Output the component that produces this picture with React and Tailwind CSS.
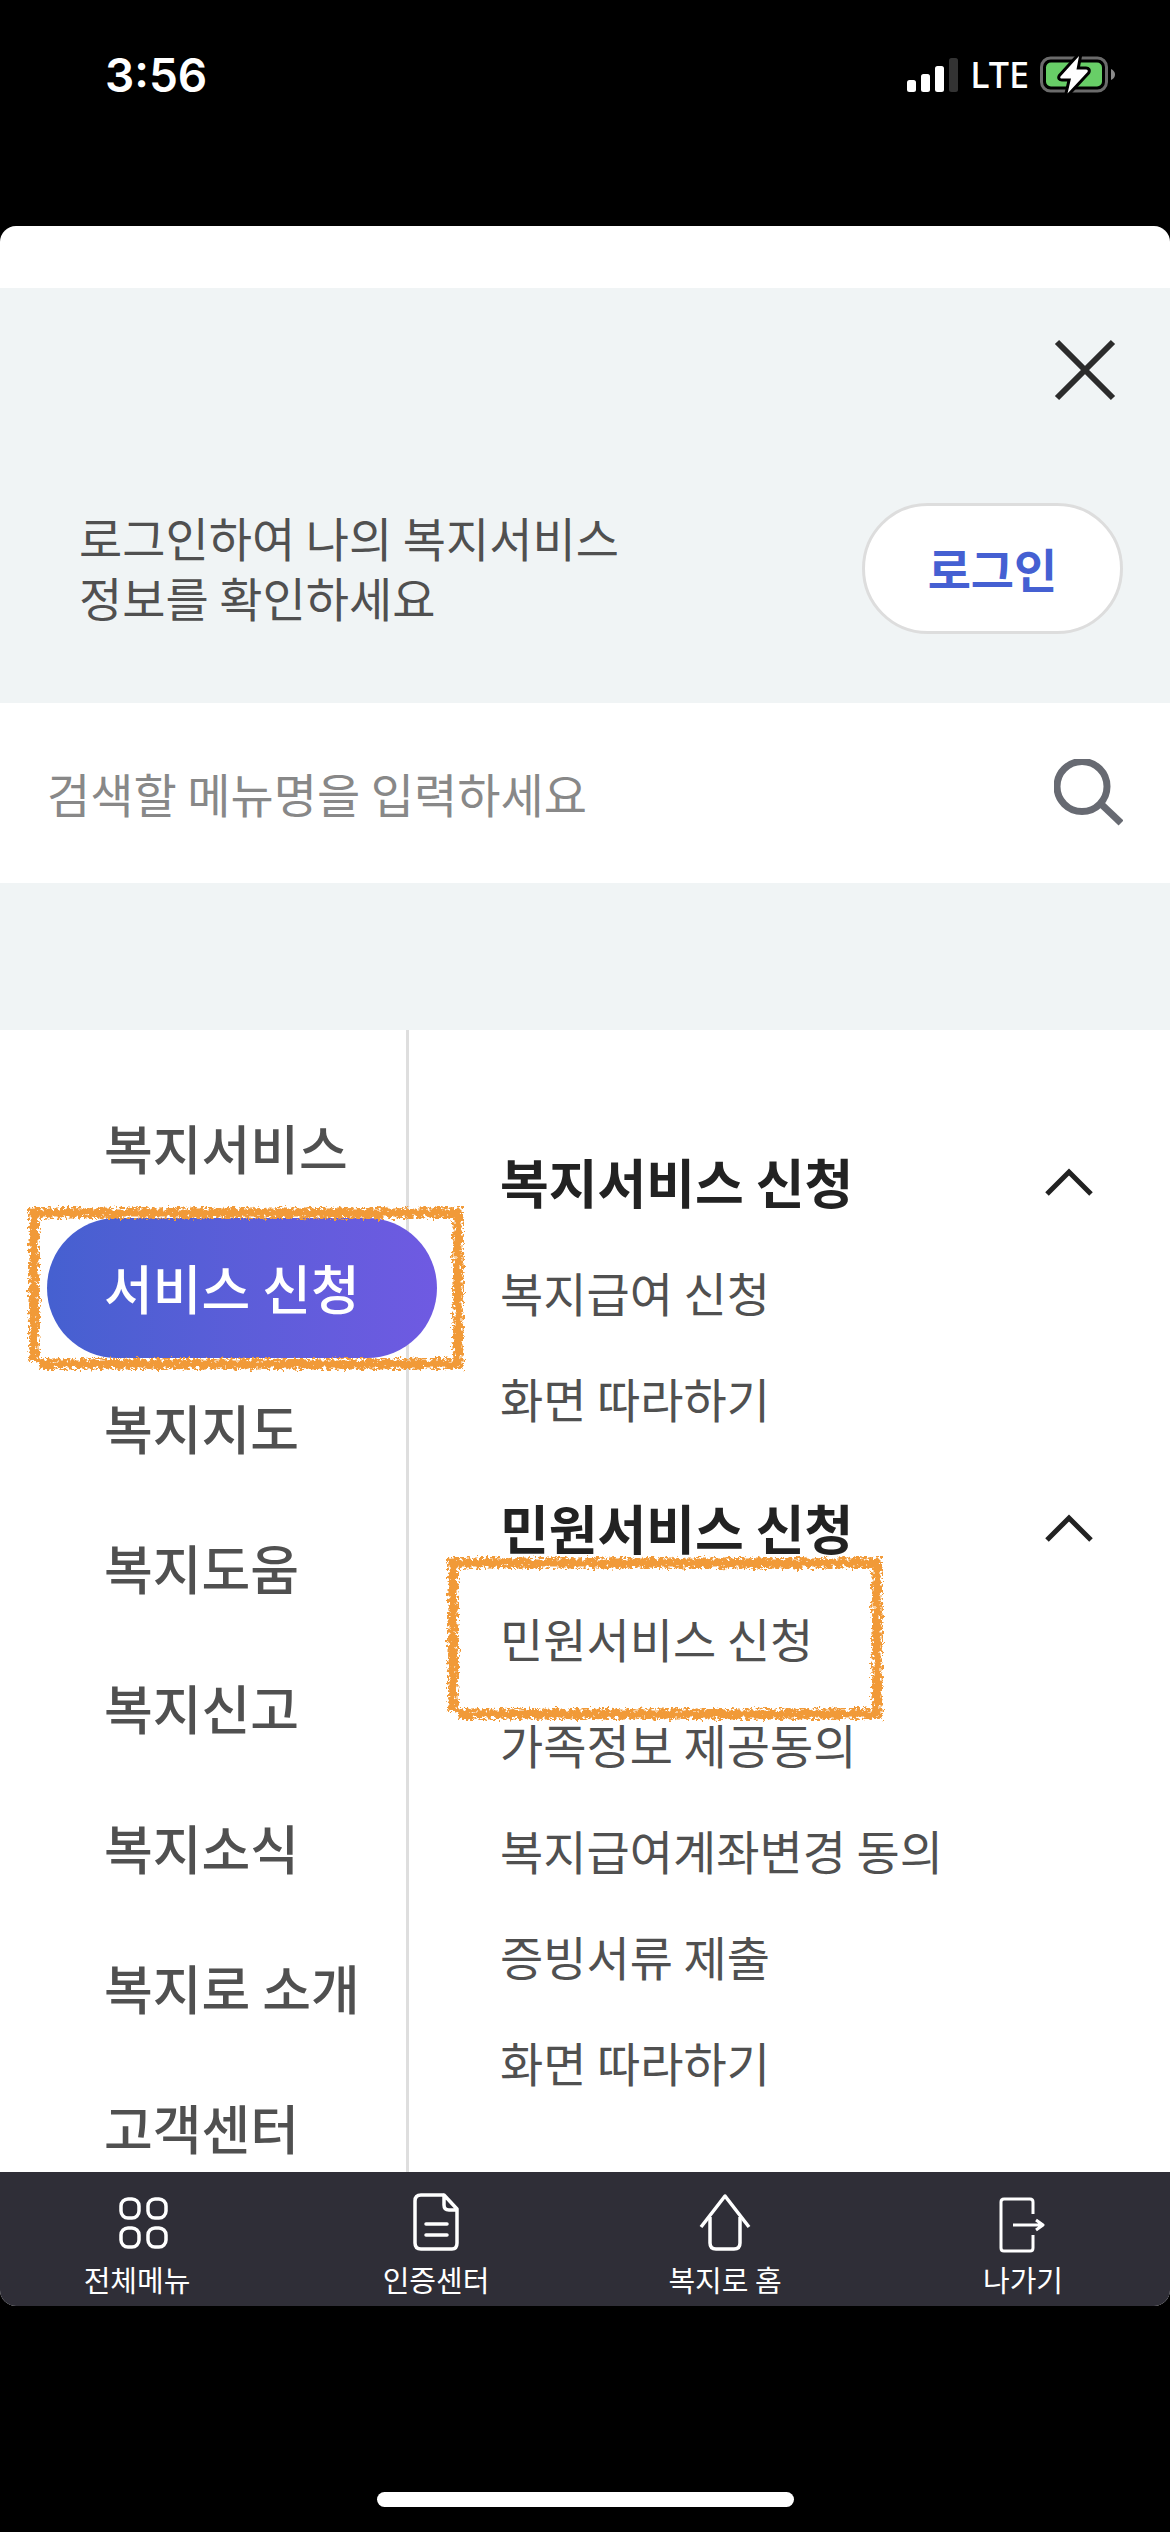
const menus = ["복지서비스", "서비스 신청", "복지지도", "복지도움", "복지신고", "복지소식", "복지로 소개", "고객센터"]

const sections = [
    {
        title: "복지서비스 신청",
        items: ["복지급여 신청", "화면 따라하기"]
    },
    {
        title: "민원서비스 신청",
        items: ["민원서비스 신청", "가족정보 제공동의", "복지급여계좌변경 동의", "증빙서류 제출", "화면 따라하기"]
    }
]

const tabs = [
    {
        label: "전체메뉴",
        icon: (
            <g strokeWidth="3.5">
                <rect x="14" y="7" width="18" height="19" rx="7" />
                <rect x="41" y="7" width="18" height="19" rx="7" />
                <rect x="14" y="36" width="18" height="19" rx="7" />
                <rect x="41" y="36" width="18" height="19" rx="7" />
            </g>
        )
    },
    {
        label: "인증센터",
        icon: (
            <g strokeWidth="3.5">
                <path d="M38 3H15Q9 3 9 9V51Q9 57 15 57H46Q51 57 51 51V17L38 3V13Q38 18 43 18H51" />
                <path d="M20 32H41M20 43H41" strokeLinecap="round" />
            </g>
        )
    },
    {
        label: "복지로 홈",
        icon: (
            <g strokeWidth="3.5">
                <path d="M6 35L30 4L54 35" />
                <path d="M15 25V51Q15 57 21 57H39Q45 57 45 51V25" />
            </g>
        )
    },
    {
        label: "나가기",
        icon: (
            <g strokeWidth="3">
                <path d="M40 22V10Q40 7 37 7H11Q8 7 8 10V56Q8 59 11 59H37Q40 59 40 56V43" />
                <path d="M20 33H50M43 28L50 33L43 38" />
            </g>
        )
    }
]

function StatusBar() {
    return (
        <header className="h-[226px] shrink-0 flex items-start justify-between pl-[105px] pr-[54px] pt-[45px] text-white">
            <span className="text-[46px] leading-[60px] font-semibold font-['Inter',sans-serif]">3:56</span>
            <div className="flex items-center h-[60px] gap-[11px]">
                <svg className="w-[52px] h-[36px]" viewBox="0 0 52 36" fill="#fff">
                    <rect x="0" y="23" width="9" height="12" rx="2.5" />
                    <rect x="14" y="17" width="9" height="18" rx="2.5" />
                    <rect x="28" y="9" width="9" height="26" rx="2.5" />
                    <rect x="42" y="1" width="9" height="34" rx="2.5" fill="#333" />
                </svg>
                <span className="text-[36px] leading-[60px] font-medium font-['Noto_Sans',sans-serif]">LTE</span>
                <svg className="w-[76px] h-[40px]" viewBox="0 0 76 40">
                    <rect x="1.5" y="3" width="65" height="33" rx="9" fill="none" stroke="#6b6b6b" strokeWidth="3" />
                    <path d="M71 14Q75 16 75 19.500T71 25Z" fill="#8a8a8a" />
                    <rect x="6" y="7.500" width="56" height="24" rx="5" fill="#68ce67" />
                    <path
                        d="M39 1L20.500 21.500Q19.500 23.500 22 23.500H31L27.500 38.500L47.500 17Q48.500 14.500 46 14.500H36.500Z"
                        fill="#fff"
                        stroke="#000"
                        strokeWidth="6"
                        strokeLinejoin="round"
                        paintOrder="stroke"
                    />
                </svg>
            </div>
        </header>
    )
}

// crayon style frame drawn over a menu entry: a solid core with a speckled edge
function CrayonBox({ id, className }) {
    return (
        <svg className={className} viewBox="0 0 437 164" fill="none" stroke="#f19a38" overflow="visible" aria-hidden="true">
            <filter id={`${id}-core`} filterUnits="userSpaceOnUse" x="-10" y="-10" width="457" height="184">
                <feTurbulence type="fractalNoise" baseFrequency="0.2" numOctaves="3" seed="4" />
                <feDisplacementMap in="SourceGraphic" scale="9" xChannelSelector="R" yChannelSelector="G" />
            </filter>
            <filter id={`${id}-edge`} filterUnits="userSpaceOnUse" x="-10" y="-10" width="457" height="184">
                <feTurbulence type="fractalNoise" baseFrequency="0.3" numOctaves="3" seed="9" result="noise" />
                <feDisplacementMap in="SourceGraphic" in2="noise" scale="7" xChannelSelector="R" yChannelSelector="G" result="line" />
                <feColorMatrix in="noise" values="0 0 0 0 0  0 0 0 0 0  0 0 0 0 0  0 0 14 0 -6.2" result="holes" />
                <feComposite in="line" in2="holes" operator="in" />
            </filter>
            <g filter={`url(#${id}-core)`} strokeWidth="7">
                <path d="M4 7H431V158H12" />
                <path d="M7 4V154" />
            </g>
            <g filter={`url(#${id}-edge)`} strokeWidth="12">
                <path d="M2 7H431V158H12" />
                <path d="M7 2V156" />
            </g>
        </svg>
    )
}

function LoginPanel() {
    return (
        <section className="bg-[#f0f4f5] pt-[44px] pb-[69px]">
            <div className="flex justify-end pr-[47px]">
                <button type="button" aria-label="닫기" className="w-[76px] h-[76px] flex items-center justify-center">
                    <svg className="w-[62px] h-[62px]" viewBox="0 0 62 62" stroke="#2b2b2b" strokeWidth="6">
                        <path d="M3 3L59 59M59 3L3 59" />
                    </svg>
                </button>
            </div>
            <div className="flex items-center justify-between pl-[79px] pr-[47px] pt-[95px]">
                <p className="text-[47px] leading-[60px] text-[#505050] pb-1">
                    로그인하여 나의 복지서비스
                    <br />
                    정보를 확인하세요
                </p>
                <button
                    type="button"
                    className="w-[261px] h-[131px] rounded-full border-3 border-[#dddddd] bg-white text-[47px] font-bold text-[#4560d2]"
                >
                    로그인
                </button>
            </div>
        </section>
    )
}

function SearchBar() {
    return (
        <form className="h-[180px] shrink-0 flex items-center justify-between bg-white px-[47px] pb-[2px]">
            <input
                type="search"
                aria-label="메뉴 검색"
                placeholder="검색할 메뉴명을 입력하세요"
                className="flex-1 min-w-0 h-[100px] text-[47px] text-[#505050] placeholder:text-[#888888] outline-none"
            />
            <button type="button" aria-label="검색">
                <svg className="w-[69px] h-[67px]" viewBox="0 0 69 67" fill="none" stroke="#676a72" strokeWidth="7">
                    <circle cx="28" cy="27.500" r="25" />
                    <path d="M46 44L67 64" />
                </svg>
            </button>
        </form>
    )
}

function SideMenu() {
    return (
        <ul className="w-[409px] shrink-0 border-r-3 border-[#dedede] pt-12 pl-[47px]">
            {menus.map((menu, index) => (
                <li key={menu} className="relative">
                    <a
                        href="#"
                        className={
                            index === 1
                                ? "relative flex items-center w-[390px] h-[140px] pl-[57px] rounded-full bg-linear-to-r from-[#4560d0] to-[#6f5ae2] text-[53px] font-medium text-white"
                                : "flex items-center h-[140px] pl-[57px] text-[53px] font-medium text-[#505050]"
                        }
                    >
                        {menu}
                    </a>
                    {index === 1 && <CrayonBox id="crayon-side" className="absolute -left-5 -top-3 w-[437px] h-[164px] max-w-none" />}
                </li>
            ))}
        </ul>
    )
}

function SubMenu() {
    return (
        <div className="flex-1 flex flex-col gap-5 pt-[95px] pl-[91px]">
            {sections.map((section, index) => (
                <section key={section.title}>
                    <h2>
                        <button
                            type="button"
                            className="w-full h-[114px] flex items-center justify-between pr-[77px] text-[53px] font-bold text-[#222222]"
                        >
                            {section.title}
                            <svg className="w-[48px] h-[28px]" viewBox="0 0 48 28" fill="none" stroke="#222" strokeWidth="5">
                                <path d="M2 26L24 4L46 26" />
                            </svg>
                        </button>
                    </h2>
                    <ul>
                        {section.items.map((item, i) => (
                            <li key={item} className="relative">
                                <a href="#" className="flex items-center h-[106px] text-[47px] text-[#505050]">
                                    {item}
                                </a>
                                {index === 1 && i === 0 && (
                                    <CrayonBox id="crayon-sub" className="absolute -left-[54px] -top-[29px] w-[437px] h-[164px] max-w-none" />
                                )}
                            </li>
                        ))}
                    </ul>
                </section>
            ))}
        </div>
    )
}

function BottomNav() {
    return (
        <nav className="shrink-0 bg-[#2f2e37]">
            <div className="-mr-6 pt-5 pb-[6px] grid grid-cols-[274fr_324fr_254fr_342fr]">
                {tabs.map((tab) => (
                    <a key={tab.label} href="#" className="flex flex-col items-center gap-[6px] text-[29px] leading-[42px] text-white">
                        <svg className="w-[60px] h-[60px]" viewBox="0 0 60 60" fill="none" stroke="#fff" strokeLinejoin="round" overflow="visible">
                            {tab.icon}
                        </svg>
                        {tab.label}
                    </a>
                ))}
            </div>
        </nav>
    )
}

export default function App() {
    return (
        <div className="h-screen flex flex-col bg-black font-['Noto_Sans_CJK_KR',sans-serif]">
            <StatusBar />
            <main className="flex-1 min-h-0 flex flex-col overflow-hidden rounded-[16px] bg-white pt-[62px]">
                <LoginPanel />
                <SearchBar />
                <div className="h-[147px] shrink-0 bg-[#f0f4f5]" />
                <div className="flex-1 min-h-0 flex overflow-hidden">
                    <SideMenu />
                    <SubMenu />
                </div>
                <BottomNav />
            </main>
            <footer className="h-[226px] shrink-0 flex items-end justify-center pb-[25px]">
                <div className="w-[417px] h-[15px] rounded-full bg-white" />
            </footer>
        </div>
    )
}
